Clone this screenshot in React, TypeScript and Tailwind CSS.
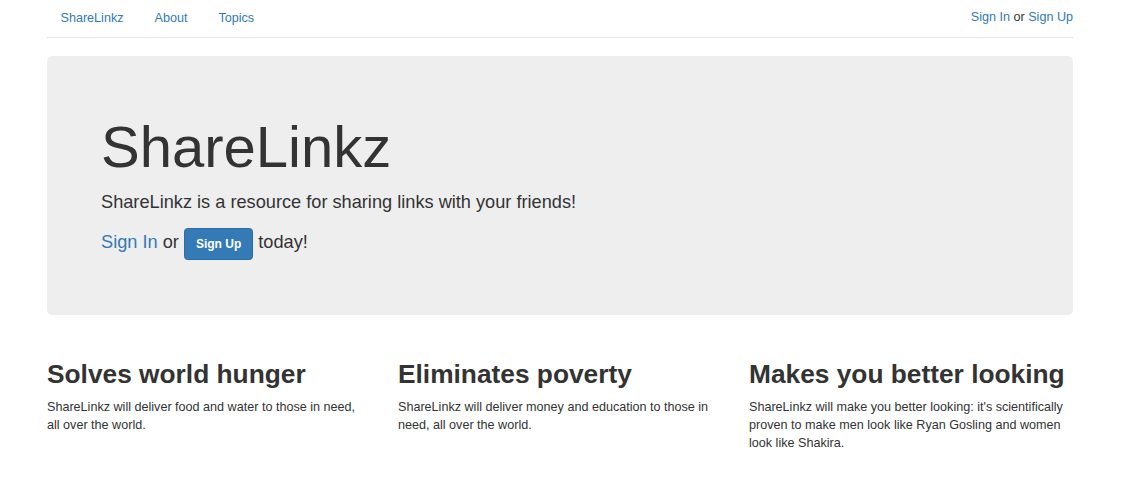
import React from 'react';

const features = [
  {
    title: 'Solves world hunger',
    body: 'ShareLinkz will deliver food and water to those in need, all over the world.',
  },
  {
    title: 'Eliminates poverty',
    body: 'ShareLinkz will deliver money and education to those in need, all over the world.',
  },
  {
    title: 'Makes you better looking',
    body: "ShareLinkz will make you better looking: it's scientifically proven to make men look like Ryan Gosling and women look like Shakira.",
  },
];

const Header = () => (
  <div className="flex justify-between border-b border-[#e5e5e5]">
    <ul className="flex gap-[4px] text-[12.6px] leading-[18px]">
      {['ShareLinkz', 'About', 'Topics'].map((item) => (
        <li key={item}>
          <a href="#" className="block px-[13.5px] pt-[9px] pb-[10px] text-[#337ab7]">
            {item}
          </a>
        </li>
      ))}
    </ul>
    <p className="pt-[8px] text-[12.6px] leading-[18px] text-[#333]">
      <a href="#" className="text-[#337ab7]">Sign In</a> or{' '}
      <a href="#" className="text-[#337ab7]">Sign Up</a>
    </p>
  </div>
);

const Jumbotron = () => (
  <div className="mt-[18px] rounded-[5.4px] bg-[#eee] px-[54px] pt-[60px] pb-[55px] text-[#333]">
    <h1 className="mb-[11px] text-[58px] leading-[62.4px]">ShareLinkz</h1>
    <p className="mb-[11.5px] text-[18.2px] leading-[27px]">
      ShareLinkz is a resource for sharing links with your friends!
    </p>
    <p className="text-[18.2px] leading-[27px]">
      <a href="#" className="text-[#337ab7]">Sign In</a> or{' '}
      <button className="inline-block rounded-[3.6px] border border-[#2e6da4] bg-[#337ab7] px-[11px] py-[6px] align-baseline text-[12px] font-bold leading-[18px] text-white">
        Sign Up
      </button>{' '}
      today!
    </p>
  </div>
);

export default function App() {
  return (
    <div className="min-h-screen bg-white font-['Liberation_Sans',Arial,sans-serif] text-[#333]">
      <div className="ml-[47px] w-[1026px]">
        <Header />
        <Jumbotron />
        <div className="mt-[45px] grid grid-cols-3 gap-[27px]">
          {features.map((f) => (
            <div key={f.title}>
              <h2 className="mb-[8px] text-[26.3px] font-bold leading-[29.7px]">{f.title}</h2>
              <p className="text-[12.6px] leading-[18px]">{f.body}</p>
            </div>
          ))}
        </div>
      </div>
    </div>
  );
}
